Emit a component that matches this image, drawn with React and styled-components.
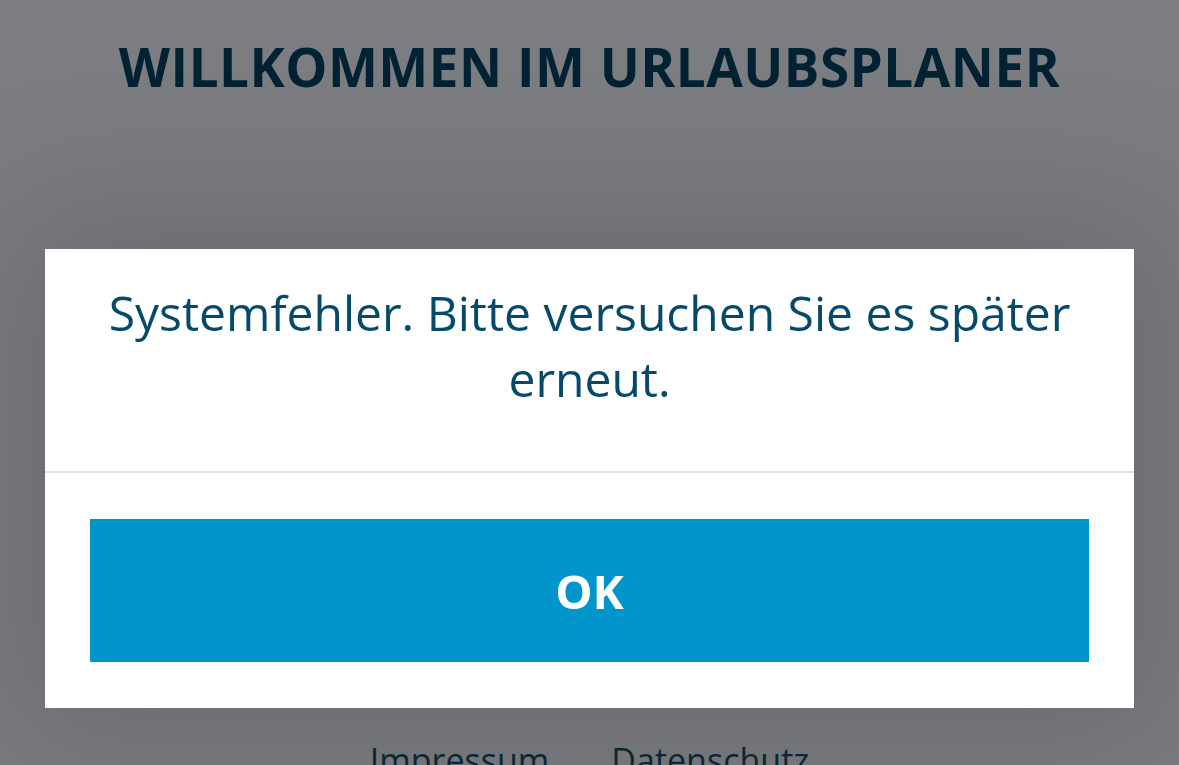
import React from "react";
import styled, { createGlobalStyle } from "styled-components";

const GlobalStyle = createGlobalStyle`
  html, body {
    margin: 0;
    padding: 0;
    height: 100%;
    overflow: hidden;
  }
  body {
    font-family: "Open Sans", "Noto Sans", sans-serif;
    background: #7b7d80;
  }
`;

const Page = styled.main`
  display: flex;
  flex-direction: column;
  align-items: center;
  height: 765px;
  background: #7b7d80;
`;

const Title = styled.h1`
  margin: 33px 0 0;
  font-size: 53px;
  line-height: 68px;
  font-weight: 700;
  letter-spacing: 0.5px;
  color: #002233;
  text-transform: uppercase;
`;

const Footer = styled.nav`
  margin-top: auto;
  display: flex;
  gap: 62px;
  transform: translateY(17px);
`;

const FooterLink = styled.a`
  font-size: 34px;
  line-height: 44px;
  color: #0d2a38;
  text-decoration: none;
`;

const Overlay = styled.div`
  position: fixed;
  inset: 0;
  padding: 249px 45px 0;
  display: flex;
  flex-direction: column;
  align-items: stretch;
`;

const Modal = styled.section`
  background: #fff;
  box-shadow: 0 0 140px 40px rgba(0, 0, 0, 0.14);
`;

const Message = styled.p`
  margin: 0;
  padding: 31px 50px 0;
  height: 191px;
  text-align: center;
  font-size: 48px;
  line-height: 66px;
  color: #064a6a;
  border-bottom: 2px solid #e4e4e4;
`;

const Actions = styled.div`
  padding: 46px 45px 46px;
`;

const Button = styled.button`
  display: block;
  width: 100%;
  height: 143px;
  border: none;
  background: #0095cb;
  color: #fff;
  font-family: inherit;
  font-size: 47px;
  font-weight: 700;
  cursor: pointer;
`;

export default function App() {
  return (
    <>
      <GlobalStyle />
      <Page>
        <Title>Willkommen im Urlaubsplaner</Title>
        <Footer>
          <FooterLink href="#">Impressum</FooterLink>
          <FooterLink href="#">Datenschutz</FooterLink>
        </Footer>
      </Page>
      <Overlay>
        <Modal role="dialog">
          <Message>Systemfehler. Bitte versuchen Sie es später erneut.</Message>
          <Actions>
            <Button>OK</Button>
          </Actions>
        </Modal>
      </Overlay>
    </>
  );
}
